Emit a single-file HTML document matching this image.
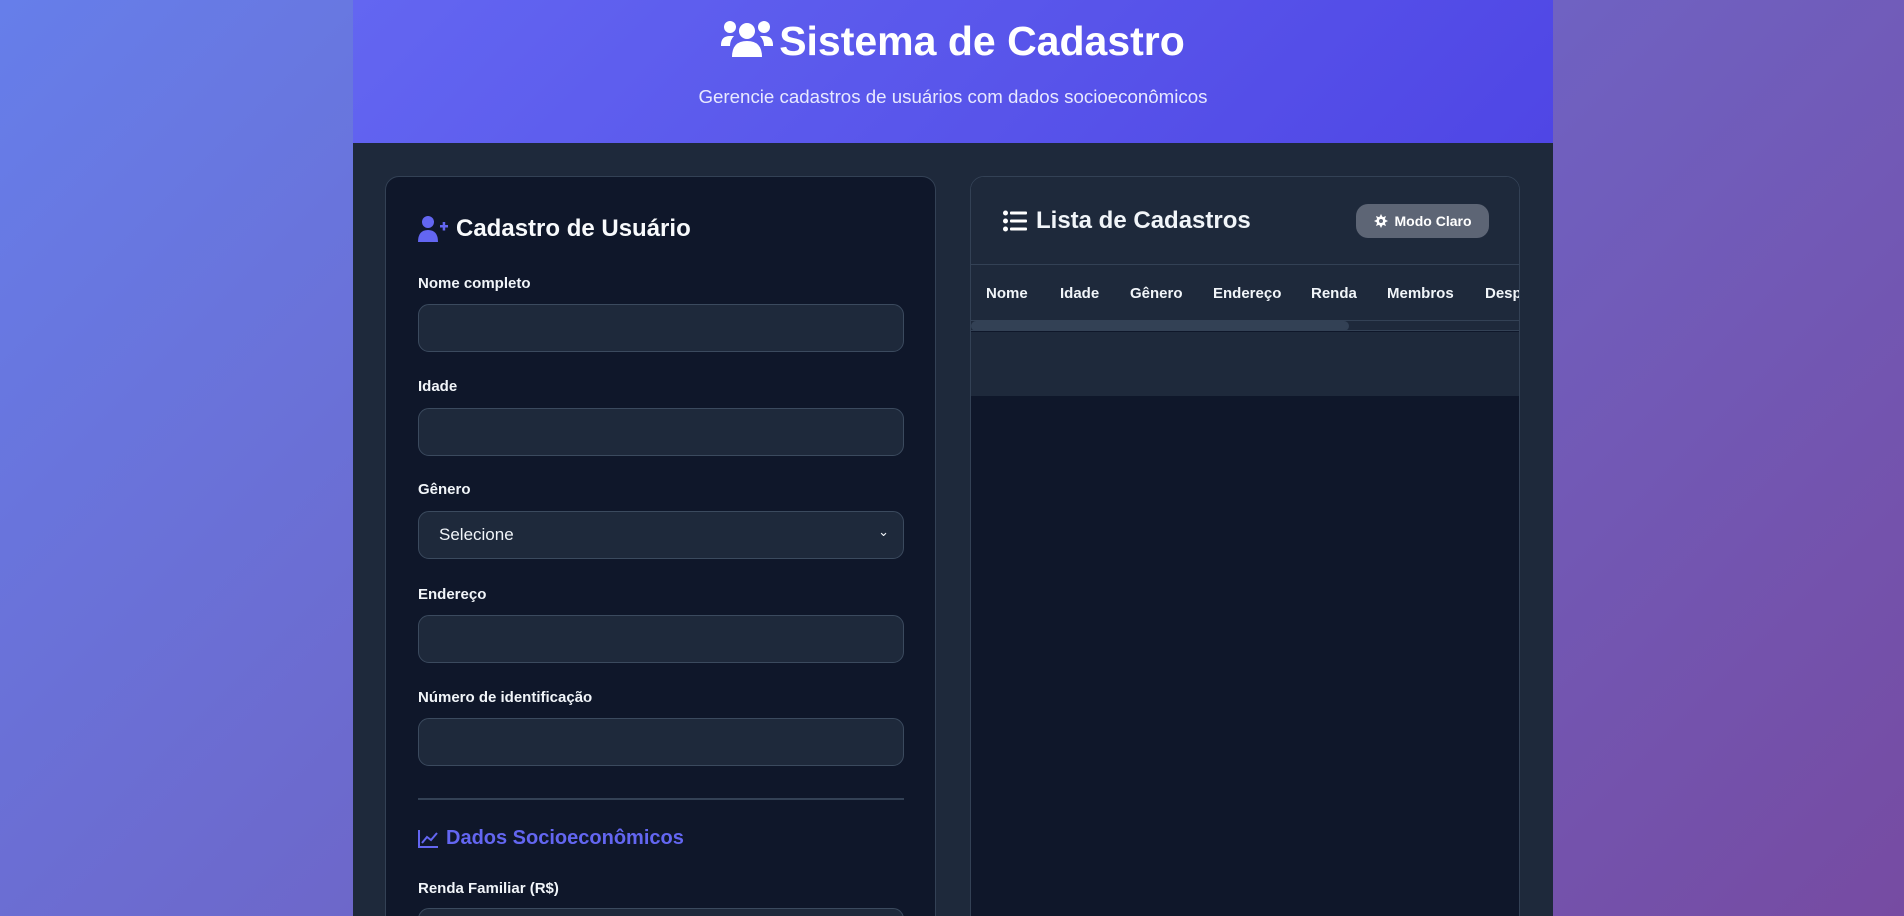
<!DOCTYPE html>
<html><head><meta charset="utf-8"><style>
*{box-sizing:border-box;margin:0;padding:0}
html,body{width:1904px;height:916px;overflow:hidden}
body{background:linear-gradient(135deg,#667eea 0%,#764ba2 100%);font-family:"Liberation Sans",sans-serif;color:#f1f5f9;position:relative}
.wrap{position:absolute;left:353px;top:0;width:1200px;height:916px;background:#1e293b;overflow:hidden}
.hdr{height:143px;background:linear-gradient(135deg,#6366f1,#4f46e5);text-align:center;position:relative}
.hdr h1{position:absolute;left:0;right:0;top:18px;font-size:41px;font-weight:700;color:#fff}
.hdr p{position:absolute;left:0;right:0;top:86px;font-size:18.7px;color:#e8e9ff}
.card{position:absolute;top:176px;border:1px solid #334155;border-radius:14px;overflow:hidden}
.l{left:32px;width:551px;height:760px;background:#0f172a}
.r{left:617px;width:550px;height:760px;background:#0f172a}
.l h2{position:absolute;left:32px;top:38px;font-size:24px;font-weight:700;color:#f8fafc;display:flex;align-items:center;gap:8px}
.lab{position:absolute;left:32px;font-size:15px;font-weight:700;color:#f1f5f9}
.inp{position:absolute;left:32px;width:486px;height:48px;background:#1e293b;border:1.5px solid #3b4a5e;border-radius:11px;font-size:17px;color:#f1f5f9;padding:13px 20px}
.hr{position:absolute;left:32px;width:486px;top:621px;border-top:2px solid #334155}
.sec{position:absolute;left:32px;top:650px;font-size:20px;font-weight:700;color:#6366f1;display:flex;align-items:center;gap:8px}
.rh{position:absolute;left:0;top:0;width:100%;height:88px;background:#1e293b;border-bottom:1px solid #334155}
.rh h2{position:absolute;left:32px;top:30px;font-size:24px;font-weight:700;display:flex;align-items:center;gap:9px}
.btn{position:absolute;left:385px;top:27px;width:133px;height:34px;border-radius:12px;background:#5d6575;font-size:14px;font-weight:700;color:#fff;display:flex;align-items:center;justify-content:center;gap:7px}
.th{position:absolute;top:88px;left:0;width:100%;height:56px;background:#1e293b;border-bottom:1px solid #334155}
.th span{position:absolute;top:20px;font-size:15px;font-weight:700;color:#f1f5f9}
.sb{position:absolute;top:144px;left:0;width:100%;height:10px;background:#1e293b;border-bottom:1px solid #334155}
.sb div{width:378px;height:10px;background:#334155;border-radius:5px}
.gr{position:absolute;top:155px;left:0;width:100%;height:64px;background:#1e293b}
</style></head><body>
<div class="wrap">
<div class="hdr"><h1><svg width="52" height="40" viewBox="0 0 52 40" style="vertical-align:-4px;margin-right:6px"><g fill="#fff"><circle cx="9" cy="8" r="6"/><circle cx="43" cy="8" r="6"/><circle cx="26" cy="12" r="8"/><path d="M0 26q0-9 9-9h4q-4 4-4 10H0z"/><path d="M52 26q0-9-9-9h-4q4 4 4 10h9z"/><path d="M11 38q0-16 15-16t15 16z"/></g></svg>Sistema de Cadastro</h1>
<p>Gerencie cadastros de usuários com dados socioeconômicos</p></div>
<div class="card l">
<h2><svg width="30" height="26" viewBox="0 0 30 26"><g fill="#6366f1"><circle cx="10" cy="6" r="6"/><path d="M0 26q0-12 10-12t10 12z"/><rect x="22" y="9" width="8" height="2.5"/><rect x="24.7" y="6" width="2.5" height="8.5"/></g></svg>Cadastro de Usuário</h2>
<div class="lab" style="top:98px">Nome completo</div><div class="inp" style="top:127px"></div>
<div class="lab" style="top:201px">Idade</div><div class="inp" style="top:231px"></div>
<div class="lab" style="top:304px">Gênero</div><div class="inp" style="top:334px">Selecione<span style="position:absolute;right:14px;top:12px;font-size:13px">&#8964;</span></div>
<div class="lab" style="top:409px">Endereço</div><div class="inp" style="top:438px"></div>
<div class="lab" style="top:512px">Número de identificação</div><div class="inp" style="top:541px"></div>
<div class="hr"></div>
<div class="sec"><svg width="20" height="18" viewBox="0 0 20 18" fill="none" stroke="#6366f1" stroke-width="2"><path d="M1 0v17h19"/><path d="M4 13l5-6 4 3 6-7"/></svg>Dados Socioeconômicos</div>
<div class="lab" style="top:703px">Renda Familiar (R$)</div><div class="inp" style="top:731px"></div>
</div>
<div class="card r">
<div class="rh"><h2><svg width="24" height="22" viewBox="0 0 24 22" fill="#fff"><circle cx="2.5" cy="3" r="2.5"/><circle cx="2.5" cy="11" r="2.5"/><circle cx="2.5" cy="19" r="2.5"/><rect x="7" y="1.5" width="17" height="3" rx="1"/><rect x="7" y="9.5" width="17" height="3" rx="1"/><rect x="7" y="17.5" width="17" height="3" rx="1"/></svg>Lista de Cadastros</h2>
<div class="btn"><svg width="14" height="14" viewBox="0 0 14 14"><g fill="#fff"><circle cx="7" cy="7" r="4.5"/><path d="M7 0l1.5 3h-3zM7 14l1.5-3h-3zM0 7l3 1.5v-3zM14 7l-3 1.5v-3zM2 2l3.2 1.2-2 2zM12 12l-3.2-1.2 2-2zM12 2l-1.2 3.2-2-2zM2 12l1.2-3.2 2 2z"/></g><circle cx="7" cy="7" r="2" fill="#5d6575"/></svg>Modo Claro</div></div>
<div class="th"><span style="left:15px">Nome</span><span style="left:89px">Idade</span><span style="left:159px">Gênero</span><span style="left:242px">Endereço</span><span style="left:340px">Renda</span><span style="left:416px">Membros</span><span style="left:514px">Desp</span></div>
<div class="sb"><div></div></div>
<div class="gr"></div>
</div>
</div>
</body></html>
